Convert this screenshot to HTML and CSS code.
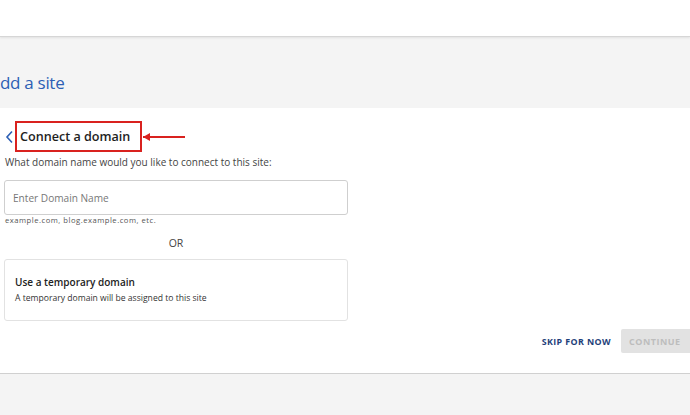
FILE: index.html
```html
<!DOCTYPE html>
<html>
<head>
<meta charset="utf-8">
<link rel="stylesheet" href="styles.css">
</head>
<body>
<div class="topbar"></div>
<div class="band"><h1 class="page-title">dd a site</h1></div>
<main class="card">
  <div class="head-row">
    <svg class="chev" width="9" height="14" viewBox="0 0 9 14"><path d="M7 1.5 L2 7 L7 12.5" fill="none" stroke="#2d5fb5" stroke-width="1.6"/></svg>
    <div class="highlight"><h2 class="title">Connect a domain</h2></div>
    <svg class="arrow" width="44" height="10" viewBox="0 0 44 10"><path d="M1 5 H43" stroke="#d9221f" stroke-width="2"/><path d="M1 5 L8 1 L8 9 Z" fill="#d9221f"/></svg>
  </div>
  <p class="question">What domain name would you like to connect to this site:</p>
  <div class="input">Enter Domain Name</div>
  <p class="hint">example.com, blog.example.com, etc.</p>
  <p class="or">OR</p>
  <div class="option">
    <div class="opt-title">Use a temporary domain</div>
    <div class="opt-desc">A temporary domain will be assigned to this site</div>
  </div>
  <div class="actions">
    <span class="skip">SKIP FOR NOW</span>
    <span class="continue">CONTINUE</span>
  </div>
</main>
<div class="bottom"></div>
</body>
</html>
```
FILE: styles.css
```css
* { box-sizing: border-box; }
html, body { margin: 0; padding: 0; }
body {
  width: 690px;
  height: 415px;
  overflow: hidden;
  background: #f4f4f4;
  font-family: "Open Sans", "Noto Sans", sans-serif;
  color: #222;
}
.topbar {
  height: 37px;
  background: #fff;
  border-bottom: 1px solid #d6d6d6;
  box-shadow: 0 1px 2px rgba(0,0,0,0.08);
}
.band {
  height: 71px;
  padding-top: 34px;
}
.page-title {
  margin: 0;
  font-size: 17px;
  font-weight: 400;
  line-height: 24px;
  color: #2d5fb5;
  letter-spacing: -0.3px;
}
.card {
  background: #fff;
  height: 266px;
  padding: 13px 0 0 4px;
  border-bottom: 1px solid #d0d0d0;
  display: flex;
  flex-direction: column;
}
.head-row {
  display: flex;
  align-items: center;
  height: 31px;
}
.chev { margin-left: 1px; margin-right: 1px; }
.highlight {
  border: 2px solid #d9221f;
  height: 31px;
  width: 127px;
  padding-left: 3px;
  display: flex;
  align-items: center;
}
.title {
  margin: 0;
  font-size: 12.6px;
  font-weight: 600;
  color: #1e1e1e;
  white-space: nowrap;
}
.arrow { margin-left: 0; }
.question {
  margin: 3px 0 0 1px;
  font-size: 10px;
  line-height: 14px;
  color: #444;
}
.input {
  margin-top: 11px;
  width: 344px;
  height: 35px;
  border: 1px solid #cfcfcf;
  border-radius: 3px;
  padding-left: 8px;
  display: flex;
  align-items: center;
  font-size: 10.1px;
  color: #777;
}
.hint {
  margin: 0 0 0 1px;
  font-size: 7.65px;
  line-height: 11px;
  letter-spacing: 0.5px;
  color: #555;
}
.or {
  margin: 10px 0 0 0;
  width: 344px;
  text-align: center;
  font-size: 10.5px;
  line-height: 14px;
  color: #444;
}
.option {
  margin-top: 9px;
  width: 344px;
  height: 62px;
  border: 1px solid #e2e2e2;
  border-radius: 3px;
  padding: 14px 0 0 10px;
}
.opt-title {
  font-size: 10px;
  font-weight: 600;
  line-height: 16px;
  color: #222;
}
.opt-desc {
  font-size: 8.6px;
  line-height: 16px;
  color: #333;
}
.actions {
  margin-top: 8px;
  display: flex;
  justify-content: flex-end;
  align-items: center;
  gap: 10px;
}
.skip {
  font-size: 8.9px;
  font-weight: 700;
  letter-spacing: 0.4px;
  color: #1f3f7a;
}
.continue {
  width: 69px;
  height: 24px;
  background: #e2e2e2;
  border-radius: 2px 0 0 2px;
  display: flex;
  align-items: center;
  padding-left: 8px;
  font-size: 9px;
  font-weight: 700;
  letter-spacing: 0.5px;
  color: #bdbdbd;
}
.bottom { height: 41px; }
```
